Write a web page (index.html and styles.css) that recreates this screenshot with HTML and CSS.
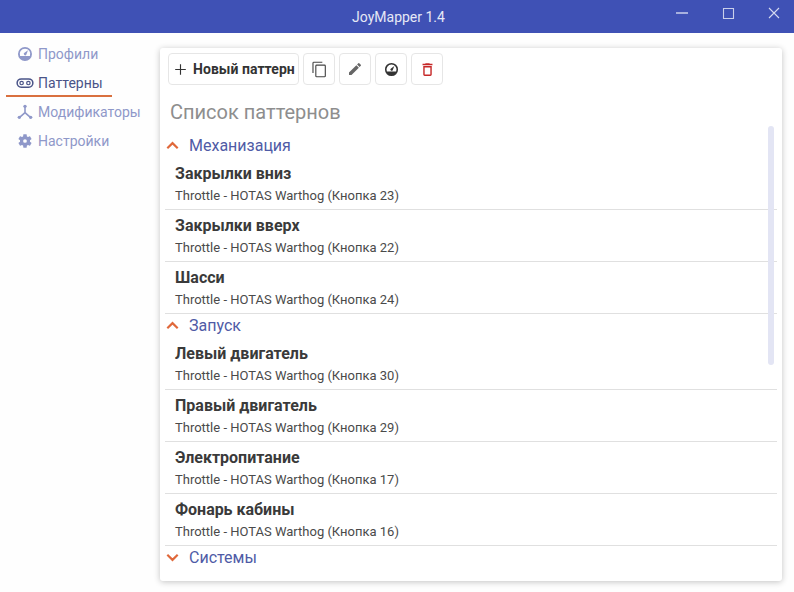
FILE: index.html
```html
<!DOCTYPE html>
<html lang="en">
<head>
    <meta charset="UTF-8">
    <title>JoyMapper 1.4</title>
    <link rel="stylesheet" href="styles.css">
</head>
<body>
    <header class="titlebar">
        <span class="titlebar-name">JoyMapper 1.4</span>
        <div class="window-buttons">
            <svg width="14" height="14" viewBox="0 0 14 14"><path d="M1 7h12" stroke="#d5daf0" stroke-width="1.400"/></svg>
            <svg width="14" height="14" viewBox="0 0 14 14"><path d="M2.500 2.500h10v10h-10z" fill="none" stroke="#c9cfea" stroke-width="1.100"/></svg>
            <svg width="14" height="14" viewBox="0 0 14 14"><path d="M2 2l10 10M12 2L2 12" stroke="#d5daf0" stroke-width="1.100"/></svg>
        </div>
    </header>

    <div class="main">
        <nav class="sidebar">
            <a class="nav-item">
                <svg class="nav-icon" viewBox="0 0 24 24"><path d="M12 1.500a10.500 10.500 0 1 0 0 21 10.500 10.500 0 0 0 0-21zm0 2.500a8 8 0 0 1 7.400 11H4.600A8 8 0 0 1 12 4zm4.500 2.500l-5.300 3.700a2 2 0 1 0 2.700 2.800z"/></svg>
                Профили
            </a>
            <a class="nav-item nav-item-active">
                <svg class="nav-icon nav-icon-wide" viewBox="0 0 24 24"><path d="M7 5.500a6.500 6.500 0 0 0 0 13h10a6.500 6.500 0 0 0 0-13zm0 2h10a4.500 4.500 0 0 1 0 9H7a4.500 4.500 0 0 1 0-9z"/><circle cx="7.500" cy="12" r="2.300" fill="none" stroke="currentColor" stroke-width="1.600"/><circle cx="16.500" cy="12" r="2.300" fill="none" stroke="currentColor" stroke-width="1.600"/></svg>
                Паттерны
            </a>
            <a class="nav-item">
                <svg class="nav-icon" viewBox="0 0 24 24"><circle cx="12" cy="3.500" r="2.500"/><circle cx="3.500" cy="20" r="2.500"/><circle cx="20.500" cy="20" r="2.500"/><path d="M10.800 4h2.400v8.300l7.300 6.600-1.600 1.800-6.900-6.200-6.900 6.200-1.600-1.800 7.300-6.600z"/></svg>
                Модификаторы
            </a>
            <a class="nav-item">
                <svg class="nav-icon" viewBox="0 0 24 24"><path d="M19.430 12.980c.04-.32.070-.64.070-.98s-.030-.66-.070-.98l2.110-1.650c.19-.15.240-.42.120-.64l-2-3.460c-.12-.22-.39-.3-.61-.22l-2.490 1c-.52-.4-1.080-.73-1.690-.98l-.38-2.650A.49.49 0 0 0 14 2h-4c-.25 0-.46.18-.49.42l-.38 2.650c-.61.25-1.170.59-1.690.98l-2.490-1c-.23-.09-.49 0-.61.22l-2 3.460c-.13.22-.07.49.12.64l2.110 1.650c-.04.32-.07.65-.07.98s.030.66.070.98l-2.110 1.650c-.19.15-.24.42-.12.64l2 3.460c.12.22.39.3.61.22l2.490-1c.52.4 1.080.73 1.690.98l.38 2.650c.03.24.24.42.49.42h4c.25 0 .46-.18.49-.42l.38-2.650c.61-.25 1.170-.59 1.690-.98l2.490 1c.23.09.49 0 .61-.22l2-3.460c.12-.22.070-.49-.12-.64zM12 14.800a2.800 2.800 0 1 1 0-5.600 2.800 2.800 0 0 1 0 5.600z"/></svg>
                Настройки
            </a>
        </nav>

        <section class="panel">
            <div class="toolbar">
                <button class="btn btn-new">
                    <svg width="17" height="17" viewBox="0 0 24 24"><path d="M19.500 12.800h-6.700v6.700h-1.600v-6.700H4.500v-1.600h6.700V4.500h1.600v6.700h6.700z" fill="#333"/></svg>
                    Новый паттерн
                </button>
                <button class="btn btn-icon">
                    <svg width="17" height="17" viewBox="0 0 24 24"><path d="M16 1H4a2 2 0 0 0-2 2v14h1.600V2.600H16zm3 4H8a2 2 0 0 0-2 2v14a2 2 0 0 0 2 2h11a2 2 0 0 0 2-2V7a2 2 0 0 0-2-2zm.4 16a.4.4 0 0 1-.4.4H8a.4.4 0 0 1-.4-.4V7a.4.4 0 0 1 .4-.4h11a.4.4 0 0 1 .4.4z" fill="#444"/></svg>
                </button>
                <button class="btn btn-icon">
                    <svg width="16" height="16" viewBox="0 0 24 24"><path d="M3 17.250V21h3.750L17.800 9.940l-3.750-3.750zM20.700 7.040a1 1 0 0 0 0-1.410l-2.340-2.340a1 1 0 0 0-1.410 0l-1.830 1.830 3.750 3.750z" fill="#666"/></svg>
                </button>
                <button class="btn btn-icon">
                    <svg width="15" height="15" viewBox="0 0 24 24"><path d="M12 1.500a10.500 10.500 0 1 0 0 21 10.500 10.500 0 0 0 0-21zm0 2.500a8 8 0 0 1 7.400 11H4.600A8 8 0 0 1 12 4zm4.500 2.500l-5.300 3.700a2 2 0 1 0 2.700 2.800z" fill="#333"/></svg>
                </button>
                <button class="btn btn-icon">
                    <svg width="17" height="17" viewBox="0 0 24 24"><path d="M6 19a2 2 0 0 0 2 2h8a2 2 0 0 0 2-2V7H6zm2-10h8v10H8zm7.500-5l-1-1h-5l-1 1H5v2h14V4z" fill="#c62828"/></svg>
                </button>
            </div>

            <h2 class="panel-title">Список паттернов</h2>

            <div class="list">
                <div class="group">
                    <svg class="chevron" viewBox="0 0 12 8"><path d="M1.200 6.500L6 1.800l4.800 4.700" fill="none" stroke="#e0683a" stroke-width="2"/></svg>
                    Механизация
                </div>
                <div class="item">
                    <div class="item-name">Закрылки вниз</div>
                    <div class="item-info">Throttle - HOTAS Warthog (Кнопка 23)</div>
                </div>
                <div class="item">
                    <div class="item-name">Закрылки вверх</div>
                    <div class="item-info">Throttle - HOTAS Warthog (Кнопка 22)</div>
                </div>
                <div class="item">
                    <div class="item-name">Шасси</div>
                    <div class="item-info">Throttle - HOTAS Warthog (Кнопка 24)</div>
                </div>
                <div class="group">
                    <svg class="chevron" viewBox="0 0 12 8"><path d="M1.200 6.500L6 1.800l4.800 4.700" fill="none" stroke="#e0683a" stroke-width="2"/></svg>
                    Запуск
                </div>
                <div class="item">
                    <div class="item-name">Левый двигатель</div>
                    <div class="item-info">Throttle - HOTAS Warthog (Кнопка 30)</div>
                </div>
                <div class="item">
                    <div class="item-name">Правый двигатель</div>
                    <div class="item-info">Throttle - HOTAS Warthog (Кнопка 29)</div>
                </div>
                <div class="item">
                    <div class="item-name">Электропитание</div>
                    <div class="item-info">Throttle - HOTAS Warthog (Кнопка 17)</div>
                </div>
                <div class="item">
                    <div class="item-name">Фонарь кабины</div>
                    <div class="item-info">Throttle - HOTAS Warthog (Кнопка 16)</div>
                </div>
                <div class="group">
                    <svg class="chevron" viewBox="0 0 12 8"><path d="M1.200 1.500L6 6.200l4.800-4.700" fill="none" stroke="#e0683a" stroke-width="2"/></svg>
                    Системы
                </div>
            </div>
            <div class="scroll-thumb"></div>
        </section>
    </div>
</body>
</html>
```

FILE: styles.css
```css
html, body{
    margin: 0;
    height: 100%;
}

body{
    display: flex;
    flex-direction: column;
    overflow: hidden;
    background-color: #fefefe;
    font-family: Roboto, "Liberation Sans", sans-serif;
    color: #333;
}

.titlebar{
    height: 33px;
    flex: none;
    position: relative;
    display: flex;
    align-items: center;
    justify-content: center;
    padding-left: 3px;
    box-sizing: border-box;
    background-color: #3f51b5;
    color: #e6e8f5;
    font-size: 14px;
}

.window-buttons{
    position: absolute;
    top: 6px;
    right: 13px;
    display: flex;
    gap: 32px;
}

.main{
    flex: 1;
    display: flex;
    min-height: 0;
}

.sidebar{
    width: 160px;
    flex: none;
    box-sizing: border-box;
    padding: 6px 0 0 6px;
}

.nav-item{
    width: 106px;
    height: 29px;
    box-sizing: border-box;
    display: flex;
    align-items: center;
    gap: 5px;
    padding-left: 11px;
    font-size: 14px;
    white-space: nowrap;
    color: #8f98c9;
}

.nav-item-active{
    color: #4a5488;
    border-bottom: 2px solid #d9703f;
    height: 28px;
    margin: 1px 0 0;
    padding-top: 1px;
}

.nav-icon{
    width: 16px;
    height: 16px;
    flex: none;
    fill: currentColor;
}

.nav-icon-wide{
    width: 18px;
    height: 18px;
    margin-left: -1px;
    margin-right: -1px;
}

.panel{
    position: relative;
    width: 622px;
    height: 533px;
    margin-top: 15px;
    overflow: hidden;
    background-color: #fff;
    border-radius: 3px;
    box-shadow: 0 1px 6px rgba(0, 0, 0, 0.24);
}

.toolbar{
    display: flex;
    gap: 4px;
    padding: 5px 0 0 8px;
}

.btn{
    height: 32px;
    box-sizing: border-box;
    display: flex;
    align-items: center;
    justify-content: center;
    padding: 0;
    background-color: #fff;
    border: 1px solid #e6e6e6;
    border-radius: 4px;
    font-family: inherit;
    font-size: 14px;
    font-weight: 700;
    color: #333;
}

.btn-new{
    width: 131px;
    gap: 4px;
    white-space: nowrap;
    justify-content: flex-start;
    padding-left: 3px;
    letter-spacing: 0.05px;
    overflow: hidden;
}

.btn-icon{
    width: 32px;
}

.panel-title{
    margin: 0;
    height: 49px;
    box-sizing: border-box;
    padding: 14px 0 0 10px;
    font-size: 20px;
    line-height: 27px;
    font-weight: 400;
    color: #8e8e8e;
}

.list{
    padding: 0 5px;
}

.group{
    height: 24px;
    box-sizing: border-box;
    padding-bottom: 1px;
    display: flex;
    align-items: center;
    gap: 10px;
    font-size: 16px;
    color: #4f5ba6;
}

.chevron{
    width: 13px;
    height: 9px;
    margin-left: 1px;
    flex: none;
}

.item{
    height: 52px;
    box-sizing: border-box;
    padding: 6px 0 0 10px;
    border-bottom: 1px solid #e0e0e0;
}

.item-name{
    font-size: 16px;
    line-height: 20px;
    font-weight: 700;
    color: #3a3a3a;
}

.item-info{
    margin-top: 3px;
    font-size: 13px;
    line-height: 18px;
    color: #4a4a4a;
}

.scroll-thumb{
    position: absolute;
    top: 78px;
    right: 8px;
    width: 6px;
    height: 239px;
    border-radius: 3px;
    background-color: #e3e5f4;
}
```
